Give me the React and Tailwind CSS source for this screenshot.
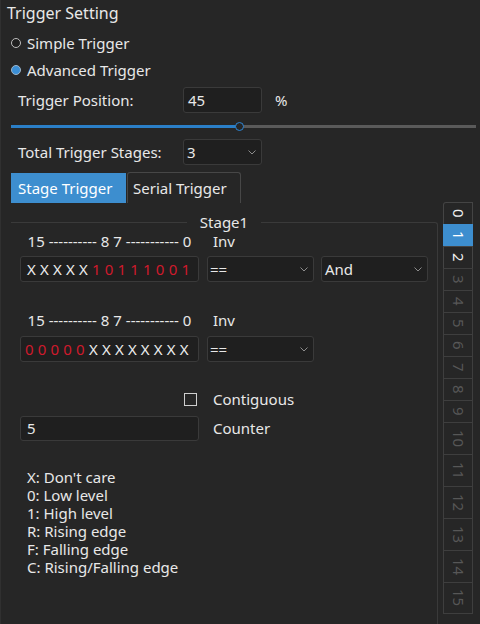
import React from "react";

const Chevron = () => (
  <svg width="8" height="5" viewBox="0 0 8 5" className="shrink-0">
    <path d="M0.5 0.5 L4 4 L7.5 0.5" fill="none" stroke="#8c8c8c" strokeWidth="1" />
  </svg>
);

const Combo = ({ value, w, pl }) => (
  <div className={`${w} ${pl} h-[26px] flex items-center justify-between pr-[5px] bg-[#1f1f1f] border border-[#3a3a3a] rounded-[3px]`}>
    <span>{value}</span>
    <Chevron />
  </div>
);

const Bits = ({ parts, pl }) => (
  <div className={`${pl} w-[179px] h-[26px] flex items-center bg-[#1f1f1f] border border-[#3a3a3a] rounded-[3px] tracking-[4.2px] whitespace-nowrap overflow-hidden`}>
    {parts.map(([t, red], i) => (
      <span key={i} className={red ? "text-[#cf1a2c]" : "text-[#ececec]"}>
        {t}
      </span>
    ))}
  </div>
);

const tabs = Array.from({ length: 16 }, (_, i) => i);

export default function App() {
  return (
    <div className="w-[480px] h-[624px] overflow-hidden bg-[#262626] text-[#e8e8e8] text-[15px] font-['Noto_Sans',sans-serif] border-l border-[#303030]">
      {/* header */}
      <div className="h-[26px] pl-[6px] flex items-center text-[16px]">Trigger Setting</div>

      <div className="h-[34px] pl-[10px] flex items-center gap-[6px]">
        <span className="w-[10px] h-[10px] rounded-full border border-[#bdbdbd] bg-[#1f1f1f]" />
        Simple Trigger
      </div>
      <div className="h-[20px] pl-[10px] flex items-center gap-[6px]">
        <span className="w-[10px] h-[10px] rounded-full border border-[#9fb4c6] bg-[#3b8fd6]" />
        Advanced Trigger
      </div>

      <div className="mt-[7px] h-[26px] flex items-center pl-[17px]">
        <span className="w-[165px]">Trigger Position:</span>
        <div className="w-[79px] h-[26px] flex items-center pl-[4px] bg-[#1f1f1f] border border-[#3a3a3a] rounded-[3px]">45</div>
        <span className="ml-[13px]">%</span>
      </div>

      {/* slider */}
      <div className="h-[26px] flex items-center pl-[10px] pr-[4px]">
        <div className="relative w-full h-[3px] bg-[#5a5a5a]">
          <div className="absolute left-0 top-0 h-[3px] w-[229px] bg-[#2b7fc7]" />
          <div className="absolute left-[224px] top-[-3px] w-[9px] h-[9px] rounded-full border-[1.5px] border-[#2d86d6] bg-[#262626]" />
        </div>
      </div>

      <div className="h-[26px] flex items-center pl-[17px]">
        <span className="w-[165px]">Total Trigger Stages:</span>
        <Combo value="3" w="w-[79px]" pl="pl-[3px]" />
      </div>

      {/* tab bar */}
      <div className="mt-[7px] h-[31px] flex items-end pl-[10px]">
        <div className="w-[115px] h-[30px] flex items-center pl-[7px] bg-[#3d8ecf] text-white">Stage Trigger</div>
        <div className="ml-[1px] w-[114px] h-[31px] flex items-center pl-[5px] border border-b-0 border-[#474747] rounded-t-[3px]">Serial Trigger</div>
      </div>

      <div className="flex pl-[10px]">
        <div className="w-[427px]">
          <fieldset className="mt-[9px] h-[420px] m-0 p-0 min-w-0 border-0 border-t border-r border-[#3a3a3a] rounded-tr-[3px]">
            <legend className="mx-auto px-[13px] leading-[20px]">Stage1</legend>
            <div className="pl-[9px]">
              <div className="h-[18px] flex items-center">
                <div className="w-[179px] text-center whitespace-nowrap">15 ---------- 8 7 ----------- 0</div>
                <div className="ml-[14px]">Inv</div>
              </div>
              <div className="mt-[6px] flex">
                <Bits pl="pl-[6px]" parts={[["XXXXX", false], ["10111001", true]]} />
                <div className="ml-[8px]">
                  <Combo value="==" w="w-[107px]" pl="pl-[2px]" />
                </div>
                <div className="ml-[7px]">
                  <Combo value="And" w="w-[107px]" pl="pl-[3px]" />
                </div>
              </div>

              <div className="mt-[29px] h-[18px] flex items-center">
                <div className="w-[179px] text-center whitespace-nowrap">15 ---------- 8 7 ----------- 0</div>
                <div className="ml-[14px]">Inv</div>
              </div>
              <div className="mt-[7px] flex">
                <Bits pl="pl-[4px]" parts={[["00000", true], ["XXXXXXXX", false]]} />
                <div className="ml-[8px]">
                  <Combo value="==" w="w-[107px]" pl="pl-[2px]" />
                </div>
              </div>

              <div className="mt-[28px] h-[18px] flex items-center">
                <div className="w-[179px] flex justify-end pr-[2px]">
                  <span className="w-[13px] h-[13px] border border-[#cfcfcf]" />
                </div>
                <div className="ml-[14px]">Contiguous</div>
              </div>
              <div className="mt-[8px] flex items-center">
                <div className="w-[179px] h-[25px] flex items-center pl-[6px] bg-[#1f1f1f] border border-[#3a3a3a] rounded-[3px]">5</div>
                <div className="ml-[14px]">Counter</div>
              </div>

              <div className="mt-[27px] pl-[7px] leading-[18px]">
                <div>X: Don't care</div>
                <div>0: Low level</div>
                <div>1: High level</div>
                <div>R: Rising edge</div>
                <div>F: Falling edge</div>
                <div>C: Rising/Falling edge</div>
              </div>
            </div>
          </fieldset>
        </div>

        {/* vertical stage tabs */}
        <div className="ml-[5px] -mt-[1px] w-[30px] flex flex-col">
          {tabs.map((n) => (
            <div
              key={n}
              className={`${n < 10 ? "h-[22px]" : "h-[32px]"} ${
                n === 1 ? "bg-[#3d8ecf] text-white border-[#3d8ecf]" : n === 0 || n === 2 ? "text-[#f0f0f0] border-[#444444]" : "text-[#575757] border-[#3e3e3e]"
              } ${n === 15 ? "border-b" : ""} ${n === 0 ? "rounded-tl-[3px]" : ""} flex items-center justify-center border-l border-t border-r`}
            >
              <span className="[writing-mode:vertical-rl] leading-none">{n}</span>
            </div>
          ))}
        </div>
      </div>
    </div>
  );
}
